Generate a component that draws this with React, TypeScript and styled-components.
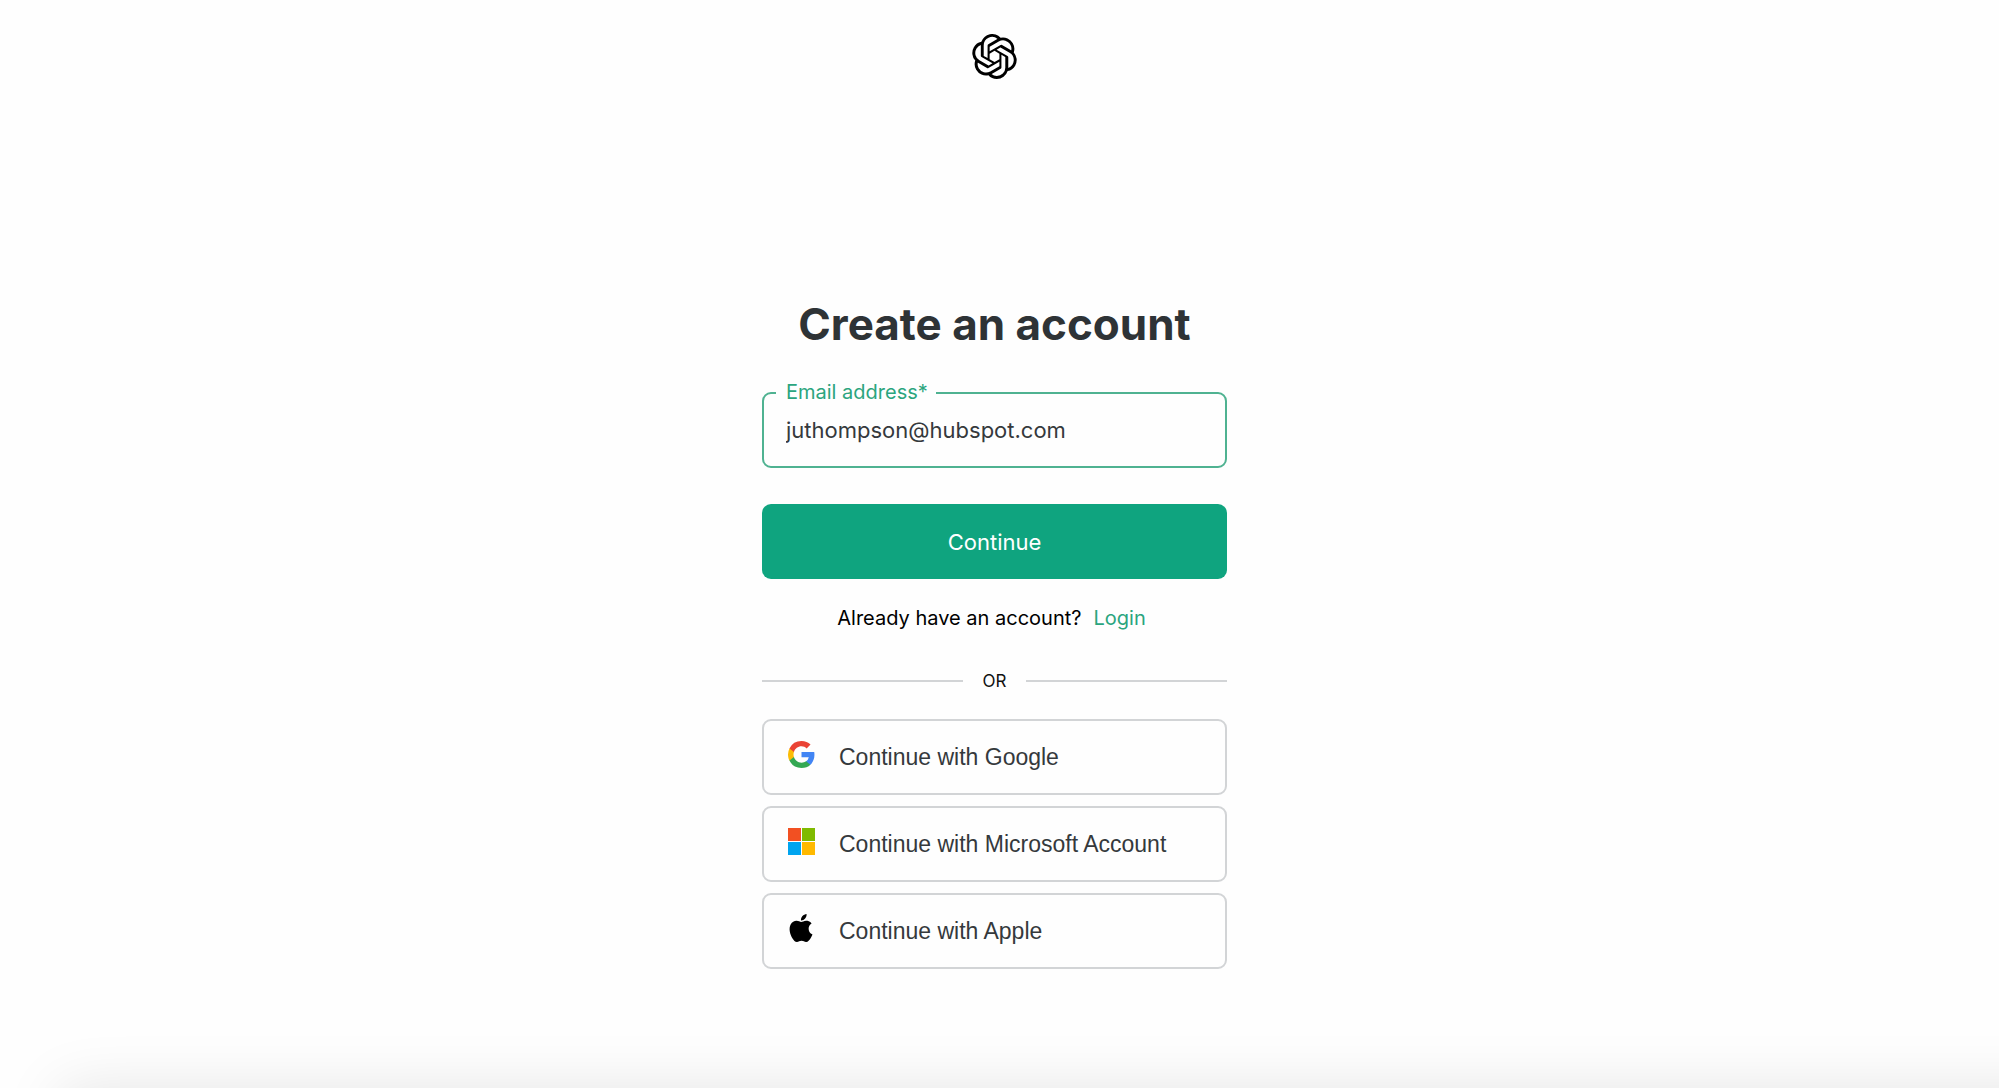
import React, { useState } from "react";
import styled, { createGlobalStyle } from "styled-components";
import { SiOpenai, SiApple } from "react-icons/si";

const GlobalStyle = createGlobalStyle`
  *, *::before, *::after { box-sizing: border-box; }
  body {
    margin: 0;
    background: #fefefe;
    color: #2e3336;
    font-family: Inter, "Liberation Sans", sans-serif;
  }
`;

const Page = styled.div`
  display: flex;
  flex-direction: column;
  min-height: 100vh;
  overflow: hidden;
`;

const Header = styled.header`
  display: flex;
  justify-content: center;
  padding: 34px 10px 0 0;
  color: #000;
`;

const Main = styled.main`
  flex: 1;
  display: flex;
  justify-content: center;
  padding: 216px 10px 48px 0;
`;

const Panel = styled.section`
  width: 465px;
  max-width: 100%;
`;

const Title = styled.h1`
  margin: 0 0 39px;
  font-size: 44px;
  line-height: 58px;
  font-weight: 700;
  text-align: center;
  white-space: nowrap;
`;

const Form = styled.form`
  display: flex;
  flex-direction: column;
  gap: 36px;
`;

const Field = styled.div`
  position: relative;
`;

const FieldLabel = styled.label`
  position: absolute;
  top: -12px;
  left: 14px;
  padding: 0 8px 0 10px;
  background: #fefefe;
  color: #2ba57e;
  font-size: 20px;
  line-height: 24px;
`;

const TextInput = styled.input`
  display: block;
  width: 100%;
  height: 76px;
  padding: 0 22px;
  border: 2px solid #4fb291;
  border-radius: 9px;
  outline: none;
  background: transparent;
  color: #35393c;
  font-family: inherit;
  font-size: 22px;
`;

const SubmitButton = styled.button`
  height: 75px;
  border: 0;
  border-radius: 9px;
  background: #0fa47f;
  color: #fff;
  font-family: inherit;
  font-size: 22px;
  cursor: pointer;
`;

const LoginLine = styled.p`
  display: flex;
  justify-content: center;
  gap: 12px;
  margin: 26px 6px 0 0;
  color: #000;
  font-size: 20px;
  line-height: 26px;
`;

const LoginLink = styled.a`
  color: #2ba57e;
  text-decoration: none;
`;

const Divider = styled.div`
  display: flex;
  align-items: center;
  gap: 20px;
  margin: 39px 0 27px;
  color: #111;
  font-size: 17px;
  line-height: 22px;

  &::before,
  &::after {
    content: "";
    flex: 1;
    height: 2px;
    background: #d2d4d6;
  }
`;

const Providers = styled.div`
  display: flex;
  flex-direction: column;
  gap: 11px;
`;

const ProviderButton = styled.button`
  display: flex;
  align-items: center;
  gap: 24px;
  height: 76px;
  padding: 0 23px;
  border: 2px solid #d2d4d6;
  border-radius: 9px;
  background: transparent;
  color: #35393c;
  font-family: "Liberation Sans", Arial, sans-serif;
  font-size: 23px;
  text-align: left;
  cursor: pointer;
`;

const ProviderIcon = styled.span`
  display: flex;
  justify-content: center;
  width: 28px;
  padding-bottom: 6px;
  color: #000;
`;

const BottomShade = styled.div`
  height: 0;
  margin-left: 120px;
  margin-right: -120px;
  box-shadow: 0 60px 60px 60px rgba(0, 0, 0, 0.1);
`;

const GoogleLogo = () => (
  <svg width="27" height="27" viewBox="0 0 18 18" aria-hidden="true">
    <path fill="#4285F4" d="M17.64 9.2c0-.637-.057-1.251-.164-1.84H9v3.481h4.844a4.14 4.14 0 0 1-1.796 2.716v2.259h2.908c1.702-1.567 2.684-3.875 2.684-6.615z" />
    <path fill="#34A853" d="M9 18c2.43 0 4.467-.806 5.956-2.18l-2.908-2.259c-.806.54-1.837.86-3.048.86-2.344 0-4.328-1.584-5.036-3.711H.957v2.332A8.997 8.997 0 0 0 9 18z" />
    <path fill="#FBBC05" d="M3.964 10.71A5.41 5.41 0 0 1 3.682 9c0-.593.102-1.17.282-1.71V4.958H.957A8.996 8.996 0 0 0 0 9c0 1.452.348 2.827.957 4.042l3.007-2.332z" />
    <path fill="#EA4335" d="M9 3.58c1.321 0 2.508.454 3.44 1.345l2.582-2.58C13.463.891 11.426 0 9 0A8.997 8.997 0 0 0 .957 4.958L3.964 7.29C4.672 5.163 6.656 3.58 9 3.58z" />
  </svg>
);

const MicrosoftLogo = () => (
  <svg width="27" height="27" viewBox="0 0 27 27" aria-hidden="true">
    <path fill="#F25022" d="M0 0h13v13H0z" />
    <path fill="#7FBA00" d="M14 0h13v13H14z" />
    <path fill="#00A4EF" d="M0 14h13v13H0z" />
    <path fill="#FFB900" d="M14 14h13v13H14z" />
  </svg>
);

const providers = [
  { name: "Google", icon: <GoogleLogo /> },
  { name: "Microsoft Account", icon: <MicrosoftLogo /> },
  { name: "Apple", icon: <SiApple size={30} aria-hidden="true" /> },
];

export default function App() {
  const [email, setEmail] = useState("juthompson@hubspot.com");

  return (
    <Page>
      <GlobalStyle />
      <Header>
        <SiOpenai size={45} role="img" aria-label="OpenAI" />
      </Header>
      <Main>
        <Panel>
          <Title>Create an account</Title>
          <Form onSubmit={(event) => event.preventDefault()}>
            <Field>
              <TextInput
                id="email"
                type="email"
                value={email}
                onChange={(event) => setEmail(event.target.value)}
                required
              />
              <FieldLabel htmlFor="email">Email address*</FieldLabel>
            </Field>
            <SubmitButton type="submit">Continue</SubmitButton>
          </Form>
          <LoginLine>
            Already have an account?
            <LoginLink href="#login">Login</LoginLink>
          </LoginLine>
          <Divider>OR</Divider>
          <Providers>
            {providers.map(({ name, icon }) => (
              <ProviderButton key={name} type="button">
                <ProviderIcon>{icon}</ProviderIcon>
                Continue with {name}
              </ProviderButton>
            ))}
          </Providers>
        </Panel>
      </Main>
      <BottomShade />
    </Page>
  );
}
